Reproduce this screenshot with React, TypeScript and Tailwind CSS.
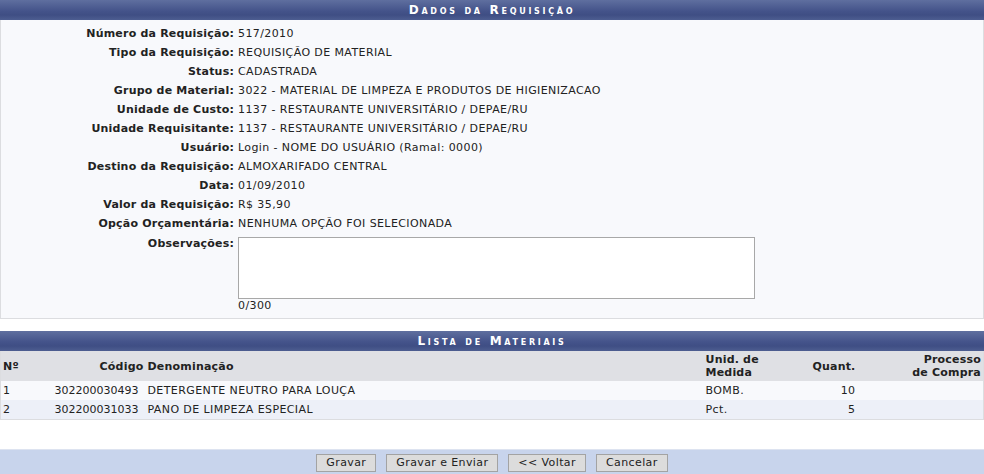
import React from 'react';

const fields: [string, string][] = [
    ['Número da Requisição:', '517/2010'],
    ['Tipo da Requisição:', 'REQUISIÇÃO DE MATERIAL'],
    ['Status:', 'CADASTRADA'],
    ['Grupo de Material:', '3022 - MATERIAL DE LIMPEZA E PRODUTOS DE HIGIENIZACAO'],
    ['Unidade de Custo:', '1137 - RESTAURANTE UNIVERSITÁRIO / DEPAE/RU'],
    ['Unidade Requisitante:', '1137 - RESTAURANTE UNIVERSITÁRIO / DEPAE/RU'],
    ['Usuário:', 'Login - NOME DO USUÁRIO (Ramal: 0000)'],
    ['Destino da Requisição:', 'ALMOXARIFADO CENTRAL'],
    ['Data:', '01/09/2010'],
    ['Valor da Requisição:', 'R$ 35,90'],
    ['Opção Orçamentária:', 'NENHUMA OPÇÃO FOI SELECIONADA'],
];

const materiais = [
    { n: 1, codigo: '302200030493', nome: 'DETERGENTE NEUTRO PARA LOUÇA', unid: 'BOMB.', quant: 10 },
    { n: 2, codigo: '302200031033', nome: 'PANO DE LIMPEZA ESPECIAL', unid: 'Pct.', quant: 5 },
];

function Caption({ children }: { children: React.ReactNode }) {
    return (
        <div className="h-[20px] flex items-center justify-center bg-[linear-gradient(#5f6f9f,#44538a_55%,#3f4e84_75%,#4d5d90)] text-white font-bold text-[12px] tracking-[2.7px] [font-variant:small-caps]">
            {children}
        </div>
    );
}

function Button({ children }: { children: React.ReactNode }) {
    return (
        <button className="h-[18px] px-[9px] bg-[#dcdcdc] border border-[#a3a3a3] text-[11px] leading-[14px] tracking-[0.4px] text-[#222]">
            {children}
        </button>
    );
}

export default function App() {
    return (
        <div className="w-[984px] h-[474px] bg-white text-[#222] text-[11px] tracking-[0.4px] font-['DejaVu_Sans',Verdana,sans-serif] overflow-hidden">
            <Caption>Dados da Requisição</Caption>
            <div className="bg-[#f8f9fc] border border-t-0 border-[#dcdde0] pt-[5px] pb-[5px]">
                {fields.map(([label, value]) => (
                    <div key={label} className="grid grid-cols-[236px_1fr] h-[19px] items-center">
                        <span className="text-right pr-[3px] font-bold tracking-[0.2px]">{label}</span>
                        <span className="pl-[1px]">{value}</span>
                    </div>
                ))}
                <div className="grid grid-cols-[236px_1fr]">
                    <span className="text-right pr-[3px] font-bold tracking-[0.2px] leading-[19px]">Observações:</span>
                    <div className="pl-[1px] pt-[3px]">
                        <textarea className="block w-[517px] h-[62px] bg-white border border-[#a8a8a8] resize-none" />
                        <div className="leading-[14px]">0/300</div>
                    </div>
                </div>
            </div>

            <div className="mt-[12px]">
                <Caption>Lista de Materiais</Caption>
                <table className="w-full table-fixed border-collapse border border-t-0 border-[#dcdde0]">
                    <colgroup>
                        <col className="w-[49px]" />
                        <col className="w-[96px]" />
                        <col className="w-[558px]" />
                        <col className="w-[82px]" />
                        <col className="w-[72px]" />
                        <col />
                    </colgroup>
                    <thead>
                        <tr className="bg-[#dfe0e4] h-[30px] font-bold leading-[13px] tracking-[0.2px]">
                            <th className="text-left px-[2px]">Nº</th>
                            <th className="text-right px-[2px]">Código</th>
                            <th className="text-left px-[2px]">Denominação</th>
                            <th className="text-left px-[2px]">Unid. de<br />Medida</th>
                            <th className="text-right px-[2px]">Quant.</th>
                            <th className="text-right px-[2px]">Processo<br />de Compra</th>
                        </tr>
                    </thead>
                    <tbody>
                        {materiais.map((m, i) => (
                            <tr key={m.n} className={`h-[19px] leading-[13px] ${i % 2 === 0 ? 'bg-[#f8f9fc]' : 'bg-[#edf0f8]'}`}>
                                <td className="px-[2px]">{m.n}</td>
                                <td className="pl-[2px] pr-[7px] text-right tracking-normal">{m.codigo}</td>
                                <td className="px-[2px]">{m.nome}</td>
                                <td className="px-[2px]">{m.unid}</td>
                                <td className="px-[2px] text-right">{m.quant}</td>
                                <td className="px-[2px]"></td>
                            </tr>
                        ))}
                    </tbody>
                </table>
            </div>

            <div className="mt-[29px] h-[27px] bg-[#c8d4ec] border-t border-[#dde3f0] flex items-center justify-center gap-[10px]">
                <Button>Gravar</Button>
                <Button>Gravar e Enviar</Button>
                <Button>&lt;&lt; Voltar</Button>
                <Button>Cancelar</Button>
            </div>
        </div>
    );
}
